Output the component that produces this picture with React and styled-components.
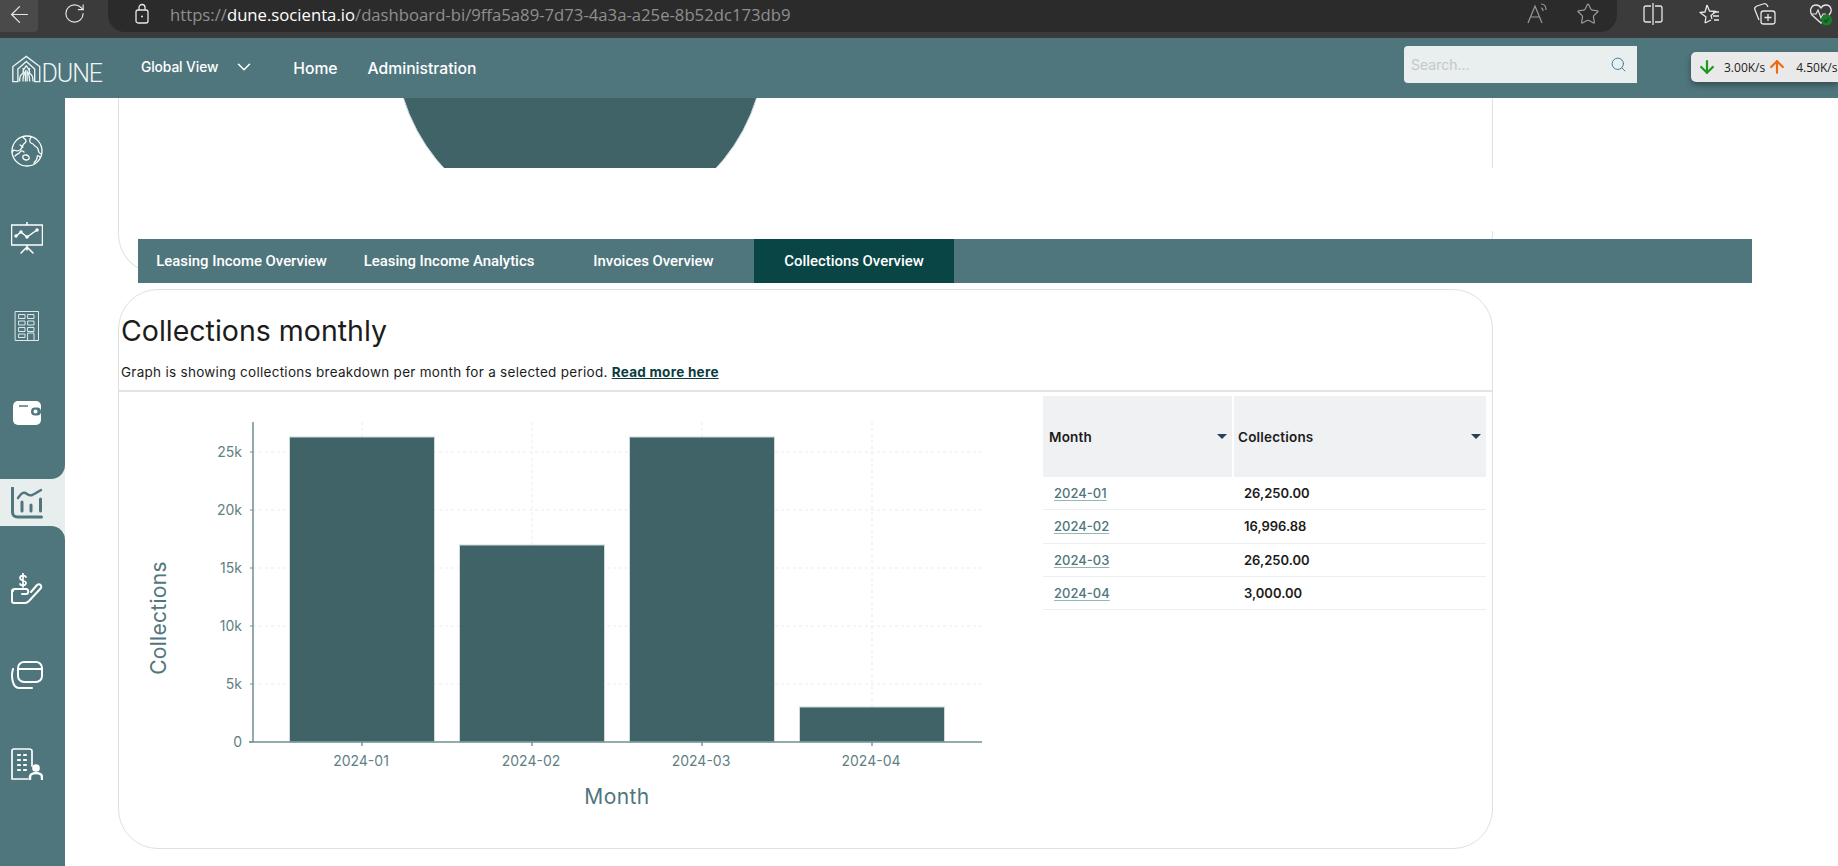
import { createGlobalStyle } from "styled-components"
import styled from "styled-components"
import { ArrowLeft, ArrowDown, ArrowUp, ChevronDown, RotateCw, Search, Star } from "lucide-react"

const TEAL = "#4f767d"
const DARK = "#3f6367"
const AXIS = "#6f8f95"
const TICK = "#5f7f85"

const GlobalStyle = createGlobalStyle`
  html, body {
    margin: 0;
    height: 100%;
    overflow: hidden;
    background: #fff;
  }
  body {
    font-family: Inter, "Open Sans", sans-serif;
  }
`

const Page = styled.div`
  width: 1838px;
  height: 866px;
  display: flex;
  flex-direction: column;
  overflow: hidden;
`

/* browser chrome */
const BrowserBar = styled.div`
  height: 38px;
  flex: none;
  display: flex;
  align-items: flex-start;
  background: #3b3b3b;
  color: #e6e6e6;
`

const BackButton = styled.div`
  width: 38px;
  height: 32px;
  padding-bottom: 4px;
  box-sizing: border-box;
  display: flex;
  align-items: center;
  justify-content: center;
  background: #4a4a4a;
  border-bottom-right-radius: 4px;
`

const ReloadButton = styled.div`
  width: 24px;
  height: 32px;
  margin-left: 24px;
  padding-bottom: 5px;
  box-sizing: border-box;
  display: flex;
  align-items: center;
  justify-content: center;
`

const AddressBar = styled.div`
  width: 1509px;
  height: 32px;
  margin-left: 22px;
  padding: 0 17px 4px 26px;
  box-sizing: border-box;
  display: flex;
  align-items: center;
  background: #2b2b2b;
  border-radius: 0 0 17px 17px;
`

const Url = styled.div`
  margin-left: 20px;
  font-family: "Open Sans", sans-serif;
  font-size: 16.7px;
  color: #8f8f8f;
  white-space: nowrap;
  flex: 1;

  b {
    font-weight: 400;
    color: #fff;
  }
`

const AddressIcons = styled.div`
  display: flex;
  align-items: center;
  gap: 26px;
  color: #9a9a9a;
`

const BrowserIcons = styled.div`
  display: flex;
  gap: 32px;
  margin-left: 24px;
  height: 28px;
  align-items: center;
`

/* app header */
const Header = styled.header`
  position: relative;
  height: 60px;
  flex: none;
  display: flex;
  align-items: center;
  background: ${TEAL};
  color: #fff;
  font-family: Inter, sans-serif;
`

const Logo = styled.div`
  display: flex;
  align-items: flex-end;
  margin-left: 12px;
  width: 90px;
  height: 32px;
  margin-top: 1px;
`

const LogoWord = styled.span`
  font-family: Roboto, sans-serif;
  font-weight: 300;
  font-size: 25px;
  line-height: 22px;
  letter-spacing: -1.1px;
  margin-left: 1px;
  color: #eef4f4;
`

const ScopeLabel = styled.span`
  margin-left: 39px;
  font-size: 13.8px;
  font-weight: 500;
  letter-spacing: -0.1px;
  margin-top: -3px;
`

const ScopeCaret = styled.span`
  display: flex;
  margin-left: 15px;
  margin-top: -2px;
`

const NavLink = styled.a`
  font-size: 15.7px;
  font-weight: 500;
  margin-left: ${props => props.$gap}px;
  color: #fff;
`

const SearchBox = styled.div`
  margin-left: auto;
  margin-right: 201px;
  margin-top: -7px;
  width: 233px;
  height: 37px;
  box-sizing: border-box;
  padding: 0 10px 0 7px;
  display: flex;
  align-items: center;
  justify-content: space-between;
  background: #e9eeee;
  border-radius: 4px 0 0 4px;
  font-size: 14px;
  color: #c4c8c9;
`

const SpeedWidget = styled.div`
  position: absolute;
  right: 0;
  top: 14px;
  width: 147px;
  height: 30px;
  box-sizing: border-box;
  padding-left: 6px;
  display: flex;
  align-items: center;
  background: #e9e9e9;
  border-radius: 5px 0 0 5px;
  box-shadow: 0 3px 6px rgba(0, 0, 0, 0.35);
  font-family: "Open Sans", sans-serif;
  font-size: 12px;
  color: #222;
  white-space: nowrap;
`

const SpeedValue = styled.span`
  margin-left: ${props => props.$left}px;
`

const UpArrow = styled.span`
  display: flex;
  margin-left: 2px;
`

/* sidebar */
const Body = styled.div`
  flex: 1;
  display: flex;
  min-height: 0;
`

const Sidebar = styled.nav`
  width: 65px;
  flex: none;
  display: flex;
  flex-direction: column;
  background: #e8eeee;
`

const SideGroup = styled.div`
  display: flex;
  flex-direction: column;
  background: ${TEAL};
  height: ${props => (props.$top ? "381px" : "auto")};
  flex: ${props => (props.$top ? "none" : "1")};
  padding-top: ${props => (props.$top ? 9 : 19)}px;
  box-sizing: border-box;
  border-radius: ${props => (props.$top ? "0 0 14px 0" : "0 14px 0 0")};
`

const SideItem = styled.div`
  height: 87.5px;
  display: flex;
  align-items: center;
  justify-content: center;
  padding-right: 11px;
`

const SideActive = styled.div`
  height: 47px;
  flex: none;
  display: flex;
  align-items: center;
  justify-content: center;
  padding-right: 11px;
`

/* content */
const Main = styled.main`
  flex: 1;
  min-width: 0;
  padding-left: 53px;
  background: #fff;
`

const TopCard = styled.section`
  width: 1375px;
  height: 176px;
  box-sizing: border-box;
  border: 1px solid #e0e0e0;
  border-top: none;
  border-radius: 0 0 40px 40px;
`

const ClippedChart = styled.div`
  height: 70px;
  overflow: hidden;

  svg {
    display: block;
  }
`

const ChartGap = styled.div`
  height: 63px;
  margin-right: -1px;
  background: #fff;
`

const TabBar = styled.div`
  position: relative;
  display: flex;
  width: 1614px;
  height: 44px;
  margin: -35px 0 0 20px;
  background: ${TEAL};
`

const Tab = styled.div`
  width: ${props => props.$width}px;
  display: flex;
  align-items: center;
  justify-content: center;
  font-family: Roboto, sans-serif;
  font-size: 14.9px;
  font-weight: 500;
  color: #fff;
  background: ${props => (props.$active ? "#0a4546" : "transparent")};
`

const Card = styled.section`
  width: 1375px;
  height: 560px;
  margin-top: 6px;
  box-sizing: border-box;
  border: 1px solid #e0e0e0;
  border-radius: 40px;
  overflow: hidden;
`

const CardHead = styled.div`
  padding: 20px 2px 9px;
  border-bottom: 2px solid #e4e4e4;
  height: 102px;
  box-sizing: border-box;
`

const Title = styled.h2`
  margin: 0;
  font-size: 28.5px;
  line-height: 42px;
  font-weight: 400;
  color: #1c1c1c;
`

const Subtitle = styled.p`
  margin: 10px 0 0;
  font-size: 13.5px;
  line-height: 20px;
  letter-spacing: 0.28px;
  color: #1c1c1c;

  a {
    font-weight: 700;
    color: #0a3c40;
    text-decoration: underline;
  }
`

const CardBody = styled.div`
  display: flex;
  align-items: flex-start;
`

const ChartSvg = styled.svg`
  display: block;
  flex: none;

  text {
    font-family: Inter, sans-serif;
  }
`

const Table = styled.table`
  margin-top: 4px;
  width: 443px;
  border-collapse: separate;
  border-spacing: 0;
  table-layout: fixed;
  font-size: 13px;
  color: #1b1b1b;
`

const HeadCell = styled.th`
  position: relative;
  height: 81px;
  padding: 0 0 0 ${props => props.$pad}px;
  background: #f0f1f3;
  border-left: ${props => (props.$split ? "2px solid #fff" : "none")};
  font-weight: 600;
  text-align: left;
  font-size: 13.5px;
  letter-spacing: 0.2px;
`

const SortCaret = styled.span`
  position: absolute;
  right: 5px;
  top: 38px;
  border-left: 5px solid transparent;
  border-right: 5px solid transparent;
  border-top: 5px solid #24405a;
`

const Cell = styled.td`
  height: 32.3px;
  padding: 0 0 0 ${props => props.$pad}px;
  border-bottom: 1px solid #eceef0;
  font-weight: ${props => (props.$strong ? 600 : 500)};
`

const MonthLink = styled.a`
  color: ${TEAL};
  text-decoration: underline;
  text-decoration-color: #8fb9b5;
  text-underline-offset: 2px;
`

/* hand drawn icons */
const Stroke = ({ size = 32, color = "#fff", width = 1.5, children }) => (
  <svg width={size} height={size} viewBox="0 0 32 32" fill="none" stroke={color} strokeWidth={width} strokeLinecap="round" strokeLinejoin="round">
    {children}
  </svg>
)

const GlobeIcon = () => (
  <Stroke width={1.3}>
    <circle cx="16" cy="16" r="15" />
    <path d="M12 2c1 2 3 2 3 4s-2 2-3 4-1 4-3 5l-3 1-3-1-2 2M4 21c2-2 4-2 5-4s3-1 4 0M20 2c-1 2-2 3-1 5s3 1 4 3 3 1 4 4 0 4 3 5M29 22c-2-2-3-2-3 1s-2 3-3 5" />
    <path d="M12 21c2-2 5-1 6 1s-1 3-3 3-4-2-3-4zM9 10l3 2" />
  </Stroke>
)

const BoardIcon = () => (
  <Stroke>
    <path d="M16 0v3M0.5 3h31v20H0.5zM16 23v5M16 25l-6 6M16 25l6 6" />
    <path d="M5 14l5-4 6 5 10-7" />
    <circle cx="5" cy="14" r="1" fill="#fff" />
    <circle cx="10" cy="10" r="1" fill="#fff" />
    <circle cx="16" cy="15" r="1" fill="#fff" />
    <circle cx="26" cy="8" r="1" fill="#fff" />
  </Stroke>
)

const TowerIcon = () => (
  <Stroke color="#dfe9ea" width={1}>
    <path d="M4.5 1.5h23v29h-23z" />
    <path d="M8 4.5h6v4H8zM17 4.5h6v4h-6zM8 11h6v4H8zM17 11h6v4h-6zM8 17.500h6v4H8zM17 17.500h6v4h-6zM8 24h6v3.500H8zM17 23h6v7.500h-6z" />
  </Stroke>
)

const WalletIcon = () => (
  <svg width="32" height="32" viewBox="0 0 32 32">
    <rect x="2" y="4" width="28" height="24" rx="5" fill="#fff" />
    <path d="M8 9h9" stroke={TEAL} strokeWidth="1.500" />
    <rect x="20" y="10.500" width="10" height="8" rx="4" fill={TEAL} />
    <circle cx="24.500" cy="14.500" r="2" fill="#fff" />
  </svg>
)

const BarsIcon = () => (
  <Stroke color={TEAL} width={3}>
    <path d="M1.500 1v24c0 3 2 5 5 5h24" />
    <path d="M7 11c3-4 5-7 9-4s6 1 14-4" strokeWidth="2.400" />
    <path d="M11 15v9M20 18v6M29.500 12v12" />
  </Stroke>
)

const HandIcon = () => (
  <Stroke width={2}>
    <path d="M2 18c0-1 1-2 2-2h11c3 0 3 5 0 5h-4M4 16c-2 0-3 1-3 2v10c0 1 1 2 2 2h11c2 0 3-1 4-2l12-13c1-2-1-5-4-3l-6 7" />
    <path d="M15 4c-1-2-6-2-6 1s6 2 6 5-5 3-6 1M12 0v14" strokeWidth="1.700" />
  </Stroke>
)

const CardsIcon = () => (
  <Stroke width={2}>
    <rect x="7" y="2" width="24" height="20" rx="6" />
    <path d="M7 9h24M2 9c-2 6-1 19 6 19h13" />
  </Stroke>
)

const OfficeIcon = () => (
  <Stroke width={1.700}>
    <path d="M1 31V3c0-1 1-2 2-2h15c2 0 3 1 3 2v15M1 31h16" />
    <path d="M7 7h2M13 7h2M7 12h2M13 12h2M7 17h2M13 17h2M7 22h2M13 22h2" strokeWidth="2.200" />
    <circle cx="25" cy="20" r="3" fill="#fff" />
    <path d="M19 31v-2c0-2 2-4 6-4s6 2 6 4v2" strokeWidth="2.500" />
  </Stroke>
)

const LogoMark = () => (
  <svg width="34" height="32" viewBox="0 0 34 32" fill="none" stroke="#eef4f4" strokeWidth="1.600">
    <path d="M1 31V13L17 1l16 12v18H27V16L17 7 7 16v15z" />
    <path d="M9 31c0-6 1-8 3-9s2-3 1-7M25 31c0-6-1-8-3-9s-2-3-1-7M13 31c0-5 0-8 3-12v12M21 31c0-5 0-8-3-12v12M17 12c-2 3-4 5-4 8M17 12c2 3 4 5 4 8" />
  </svg>
)

const LockIcon = () => (
  <svg width="16" height="22" viewBox="0 0 16 22" fill="none" stroke="#e8e8e8" strokeWidth="1.300">
    <rect x="2" y="7" width="12" height="13" rx="2" />
    <path d="M5 7V4.500a3 3 0 0 1 6 0V7" />
    <circle cx="8" cy="13.500" r="1" fill="#e8e8e8" stroke="none" />
  </svg>
)

const ReadAloudIcon = () => (
  <svg width="24" height="24" viewBox="0 0 24 24" fill="none" stroke="#9a9a9a" strokeWidth="1.200">
    <path d="M2 21L9 4l7 17M5 15h8M15 2c3 0 5 2 5 6M15 6c1 0 2 1 2 3" />
  </svg>
)

const SplitIcon = () => (
  <svg width="24" height="24" viewBox="0 0 24 24" fill="none" stroke="#e6e6e6" strokeWidth="1.300">
    <path d="M10 4H5a2 2 0 0 0-2 2v12a2 2 0 0 0 2 2h5M14 4h5a2 2 0 0 1 2 2v12a2 2 0 0 1-2 2h-5M12 1v22" />
  </svg>
)

const FavoritesIcon = () => (
  <svg width="24" height="24" viewBox="0 0 24 24" fill="none" stroke="#e6e6e6" strokeWidth="1.300" strokeLinejoin="round">
    <path d="M10 3l2.500 6 6.500.5-5 4 1 3.500M8 21l1-6-6-4.500 5-.5 2-7M8 21l6-3" />
    <path d="M16 10h6M16 14h6M17 18h5" />
  </svg>
)

const CollectionsIcon = () => (
  <svg width="24" height="24" viewBox="0 0 24 24" fill="none" stroke="#e6e6e6" strokeWidth="1.300">
    <path d="M6 18L2 8c-1-2 0-3 2-4l6-2c2-1 4 0 5 3" />
    <rect x="8" y="9" width="14" height="13" rx="2.500" />
    <path d="M15 12v7M11.500 15.500h7" />
  </svg>
)

const HealthIcon = () => (
  <svg width="24" height="24" viewBox="0 0 24 24" fill="none">
    <path d="M3 13C0 9 2 3 7 3c2 0 4 1 5 3 1-2 3-3 5-3 5 0 7 6 3 10l-8 8z" stroke="#e6e6e6" strokeWidth="1.300" />
    <path d="M2 12h5l2-4 3 8 2-4h3" stroke="#e6e6e6" strokeWidth="1.200" />
    <circle cx="17.500" cy="18" r="5.500" fill="#1b7d2b" />
    <path d="M15 18l2 2 3-4" stroke="#0f4d1a" strokeWidth="1.200" />
  </svg>
)

/* chart data, in page pixels */
const BARS = [
  { label: "2024-01", x: 289.5, top: 437 },
  { label: "2024-02", x: 459.5, top: 545 },
  { label: "2024-03", x: 629.5, top: 437 },
  { label: "2024-04", x: 799.5, top: 707 },
]
const Y_TICKS = [
  { label: "25k", y: 452 },
  { label: "20k", y: 510 },
  { label: "15k", y: 568 },
  { label: "10k", y: 626 },
  { label: "5k", y: 684 },
  { label: "0", y: 742 },
]
const ROWS = [
  ["2024-01", "26,250.00"],
  ["2024-02", "16,996.88"],
  ["2024-03", "26,250.00"],
  ["2024-04", "3,000.00"],
]
const TABS = [
  { label: "Leasing Income Overview", width: 207 },
  { label: "Leasing Income Analytics", width: 208 },
  { label: "Invoices Overview", width: 201 },
  { label: "Collections Overview", width: 200, active: true },
]

const BarChart = () => (
  <ChartSvg width="924" height="456" viewBox="119 392 924 456">
    {Y_TICKS.slice(0, 5).map(t => (
      <line key={t.y} x1="253" x2="982" y1={t.y} y2={t.y} stroke="#e9eced" strokeDasharray="3 3" />
    ))}
    {BARS.map(b => (
      <line key={b.label} x1={b.x + 72.5} x2={b.x + 72.5} y1="422" y2="742" stroke="#e9eced" strokeDasharray="3 3" />
    ))}
    {BARS.map(b => (
      <g key={b.label}>
        <rect x={b.x} y={b.top} width="145" height={742 - b.top} fill={DARK} stroke="#cddada" />
        <line x1={b.x + 72.5} x2={b.x + 72.5} y1="742" y2="746" stroke={DARK} />
        <text x={b.x + 72.5 - 1} y="766" textAnchor="middle" fontSize="14" fill={TICK}>
          {b.label}
        </text>
      </g>
    ))}
    <line x1="253" x2="253" y1="422" y2="742" stroke={AXIS} strokeWidth="1.500" />
    <line x1="249" x2="982" y1="742" y2="742" stroke={AXIS} strokeWidth="1.500" />
    {Y_TICKS.map(t => (
      <g key={t.label}>
        <line x1="250" x2="253" y1={t.y} y2={t.y} stroke={AXIS} />
        <text x="242" y={t.y + 5} textAnchor="end" fontSize="14" fill={TICK}>
          {t.label}
        </text>
      </g>
    ))}
    <text x="617" y="804" textAnchor="middle" fontSize="21" letterSpacing="0.4" fill={TEAL}>
      Month
    </text>
    <text transform="translate(166 618) rotate(-90)" textAnchor="middle" fontSize="21" letterSpacing="0.3" fill={TEAL}>
      Collections
    </text>
  </ChartSvg>
)

export default function App() {
  return (
    <Page>
      <GlobalStyle />
      <BrowserBar>
        <BackButton>
          <ArrowLeft size={27} strokeWidth={1.1} />
        </BackButton>
        <ReloadButton>
          <RotateCw size={23} strokeWidth={1.2} />
        </ReloadButton>
        <AddressBar>
          <LockIcon />
          <Url>
            https://<b>dune.socienta.io</b>/dashboard-bi/9ffa5a89-7d73-4a3a-a25e-8b52dc173db9
          </Url>
          <AddressIcons>
            <ReadAloudIcon />
            <Star size={24} strokeWidth={1.2} />
          </AddressIcons>
        </AddressBar>
        <BrowserIcons>
          <SplitIcon />
          <FavoritesIcon />
          <CollectionsIcon />
          <HealthIcon />
        </BrowserIcons>
      </BrowserBar>

      <Header>
        <Logo>
          <LogoMark />
          <LogoWord>DUNE</LogoWord>
        </Logo>
        <ScopeLabel>Global View</ScopeLabel>
        <ScopeCaret>
          <ChevronDown size={22} strokeWidth={1.7} />
        </ScopeCaret>
        <NavLink $gap={38}>Home</NavLink>
        <NavLink $gap={30}>Administration</NavLink>
        <SearchBox>
          Search...
          <Search size={17} strokeWidth={1.4} color="#3f7f9a" />
        </SearchBox>
        <SpeedWidget>
          <ArrowDown size={20} strokeWidth={2.6} color="#1c9a1c" />
          <SpeedValue $left={7}>3.00K/s</SpeedValue>
          <UpArrow>
            <ArrowUp size={20} strokeWidth={2.6} color="#ee6a10" />
          </UpArrow>
          <SpeedValue $left={9}>4.50K/s</SpeedValue>
        </SpeedWidget>
      </Header>

      <Body>
        <Sidebar>
          <SideGroup $top>
            <SideItem><GlobeIcon /></SideItem>
            <SideItem><BoardIcon /></SideItem>
            <SideItem><TowerIcon /></SideItem>
            <SideItem><WalletIcon /></SideItem>
          </SideGroup>
          <SideActive><BarsIcon /></SideActive>
          <SideGroup>
            <SideItem><HandIcon /></SideItem>
            <SideItem><CardsIcon /></SideItem>
            <SideItem><OfficeIcon /></SideItem>
          </SideGroup>
        </Sidebar>

        <Main>
          <TopCard>
            <ClippedChart>
              <svg width="1373" height="70" viewBox="119 98 1373 70">
                <circle cx="580" cy="43" r="185" fill={DARK} stroke="#cddada" />
              </svg>
            </ClippedChart>
            <ChartGap />
          </TopCard>

          <TabBar>
            {TABS.map(t => (
              <Tab key={t.label} $width={t.width} $active={t.active}>
                {t.label}
              </Tab>
            ))}
          </TabBar>

          <Card>
            <CardHead>
              <Title>Collections monthly</Title>
              <Subtitle>
                Graph is showing collections breakdown per month for a selected period. <a>Read more here</a>
              </Subtitle>
            </CardHead>
            <CardBody>
              <BarChart />
              <Table>
                <colgroup>
                  <col style={{ width: 189 }} />
                  <col />
                </colgroup>
                <thead>
                  <tr>
                    <HeadCell $pad={6}>
                      Month
                      <SortCaret />
                    </HeadCell>
                    <HeadCell $pad={4} $split>
                      Collections
                      <SortCaret />
                    </HeadCell>
                  </tr>
                </thead>
                <tbody>
                  {ROWS.map(([month, value]) => (
                    <tr key={month}>
                      <Cell $pad={11}>
                        <MonthLink>{month}</MonthLink>
                      </Cell>
                      <Cell $pad={12} $strong>{value}</Cell>
                    </tr>
                  ))}
                </tbody>
              </Table>
            </CardBody>
          </Card>
        </Main>
      </Body>
    </Page>
  )
}
